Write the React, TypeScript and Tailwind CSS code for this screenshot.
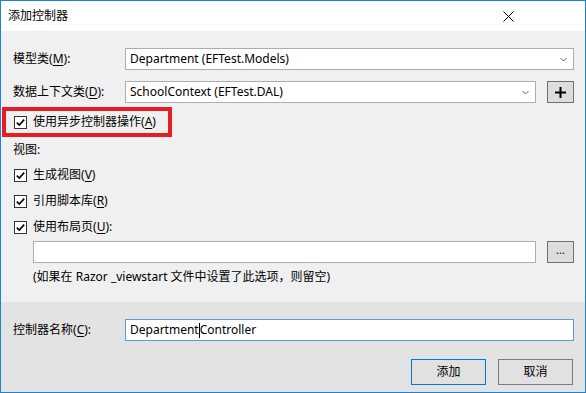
import type { ReactNode } from 'react'

const font = "font-['Noto_Sans','Noto_Sans_CJK_SC',sans-serif]"

function Check() {
  return (
    <span className="flex h-[13px] w-[13px] shrink-0 items-center justify-center border border-[#333333] bg-white">
      <svg width="11" height="11" viewBox="0 0 11 11">
        <path d="M1.8 5.6 L4.3 8.1 L9.2 2.6" fill="none" stroke="#000" strokeWidth="1.6" />
      </svg>
    </span>
  )
}

function Chevron() {
  return (
    <svg width="7" height="5" viewBox="0 0 7 5" className="shrink-0">
      <path d="M0.5 1 L3.5 4 L6.5 1" fill="none" stroke="#606060" strokeWidth="1" />
    </svg>
  )
}

function Select({ value, className }: { value: string; className: string }) {
  return (
    <div
      className={`flex h-[22px] items-center justify-between border border-[#abadb3] bg-white pr-[6px] pl-[4px] ${className}`}
    >
      <span>{value}</span>
      <Chevron />
    </div>
  )
}

function CheckRow({ children }: { children: ReactNode }) {
  return (
    <div className="flex h-[20px] items-center gap-[6px] pl-[13px]">
      <Check />
      <span>{children}</span>
    </div>
  )
}

function Key({ k }: { k: string }) {
  return (
    <>
      (<u className="underline-offset-2">{k}</u>)
    </>
  )
}

export default function App() {
  return (
    <div className={`${font} relative h-[393px] w-[586px] border border-[#1a84d8] bg-white text-[12px] text-black`}>
      {/* title bar */}
      <div className="flex h-[30px] items-center justify-between pr-[71px] pl-[7px] text-[12px]">
        <span>添加控制器</span>
        <svg width="11" height="11" viewBox="0 0 11 11">
          <path d="M0.5 0.5 L10.5 10.5 M10.5 0.5 L0.5 10.5" stroke="#000" strokeWidth="1" />
        </svg>
      </div>

      {/* body */}
      <div className="flex h-[271px] flex-col bg-[#f0f0f0] pt-[17px]">
        <div className="flex h-[22px] items-center pr-[11px] pl-[12px]">
          <span className="w-[112px]">
            模型类<Key k="M" />:
          </span>
          <Select value="Department (EFTest.Models)" className="flex-1" />
        </div>

        <div className="mt-[11px] flex h-[22px] items-center pr-[11px] pl-[12px]">
          <span className="w-[112px]">
            数据上下文类<Key k="D" />:
          </span>
          <Select value="SchoolContext (EFTest.DAL)" className="w-[411px]" />
          <div className="ml-auto flex h-[22px] w-[27px] items-center justify-center border border-[#707070] bg-[#dddddd]">
            <svg width="11" height="11" viewBox="0 0 11 11">
              <path d="M5.5 0 V11 M0 5.5 H11" stroke="#000" strokeWidth="2" />
            </svg>
          </div>
        </div>

        <div className="mt-[6px] flex h-[26px] items-center">
          <CheckRow>
            使用异步控制器操作<Key k="A" />
          </CheckRow>
        </div>

        <div className="mt-[5px] flex h-[20px] items-center pl-[12px]">视图:</div>

        <div className="mt-[5px]">
          <CheckRow>
            生成视图<Key k="V" />
          </CheckRow>
        </div>
        <div className="mt-[6px]">
          <CheckRow>
            引用脚本库<Key k="R" />
          </CheckRow>
        </div>
        <div className="mt-[6px]">
          <CheckRow>
            使用布局页<Key k="U" />:
          </CheckRow>
        </div>

        <div className="mt-[4px] flex h-[22px] items-center pr-[11px] pl-[32px]">
          <div className="h-[22px] w-[503px] border border-[#abadb3] bg-white" />
          <div className="ml-auto flex h-[22px] w-[27px] items-center justify-center border border-[#707070] bg-[#dddddd] pb-[4px] text-[11px]">
            ...
          </div>
        </div>

        <div className="mt-[4px] flex h-[20px] items-center pl-[32px]">
          (如果在 Razor _viewstart 文件中设置了此选项，则留空)
        </div>
      </div>

      {/* bottom */}
      <div className="flex h-[90px] flex-col bg-[#e3e3e3] pt-[17px]">
        <div className="flex h-[22px] items-center pr-[11px] pl-[12px]">
          <span className="w-[112px]">
            控制器名称<Key k="C" />:
          </span>
          <div className="flex h-[22px] flex-1 items-center border border-[#569de5] bg-white pl-[4px]">
            Department
            <span className="inline-block h-[15px] w-px bg-black" />
            Controller
          </div>
        </div>
        <div className="mt-[18px] flex h-[26px] justify-end gap-[12px] pr-[12px]">
          <div className="flex w-[75px] items-center justify-center border border-[#0078d7] bg-[#e1e1e1]">添加</div>
          <div className="flex w-[75px] items-center justify-center border border-[#7a7a7a] bg-[#e1e1e1]">取消</div>
        </div>
      </div>

      {/* annotation highlight */}
      <div className="absolute top-[106px] left-[1px] h-[30px] w-[170px] border-[4px] border-[#e81c24]" />
    </div>
  )
}
